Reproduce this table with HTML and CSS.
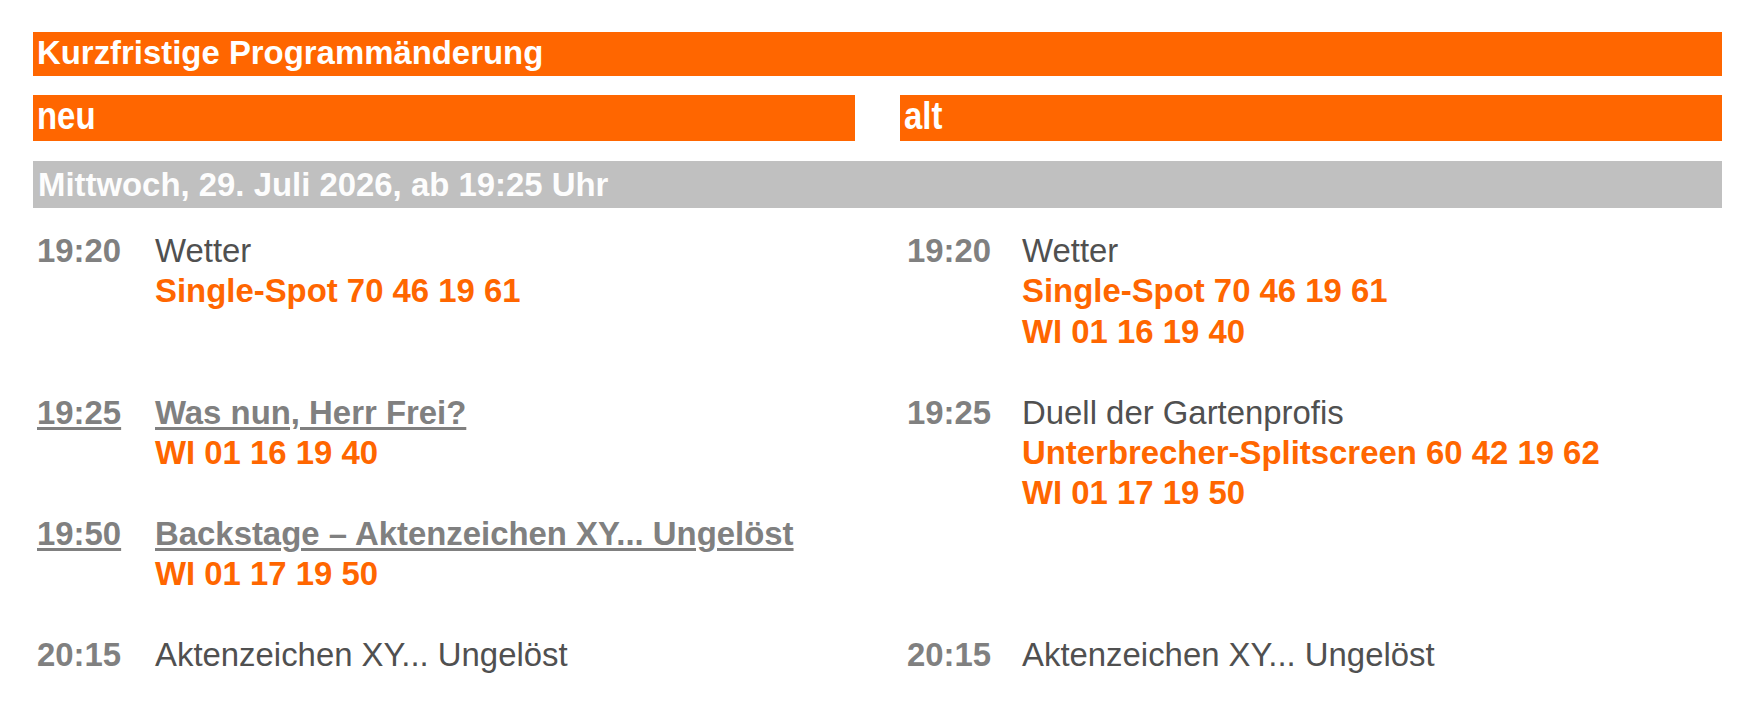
FILE: index.html
```html
<!DOCTYPE html>
<html lang="de">
<head>
<meta charset="utf-8">
<title>Kurzfristige Programmänderung</title>
<link rel="stylesheet" href="styles.css">
</head>
<body>
<div class="page">
  <div class="bar bar-title">Kurzfristige Programmänderung</div>
  <div class="cols heads">
    <div class="bar bar-col"><span class="tall">neu</span></div>
    <div class="bar bar-col"><span class="tall">alt</span></div>
  </div>
  <div class="bar bar-date">Mittwoch, 29. Juli 2026, ab 19:25 Uhr</div>
  <div class="cols schedule">
    <div class="cell cell-new">
      <div class="entry">
        <div class="time">19:20</div>
        <div class="body">
          <div class="title">Wetter</div>
          <div class="code">Single-Spot 70 46 19 61</div>
        </div>
      </div>
    </div>
    <div class="cell cell-old">
      <div class="entry">
        <div class="time">19:20</div>
        <div class="body">
          <div class="title">Wetter</div>
          <div class="code">Single-Spot 70 46 19 61</div>
          <div class="code">WI 01 16 19 40</div>
        </div>
      </div>
    </div>
    <div class="cell cell-new">
      <div class="entry changed">
        <div class="time"><span class="ul">19:25</span></div>
        <div class="body">
          <div class="title"><span class="ul">Was nun, Herr Frei?</span></div>
          <div class="code">WI 01 16 19 40</div>
        </div>
      </div>
      <div class="entry changed">
        <div class="time"><span class="ul">19:50</span></div>
        <div class="body">
          <div class="title"><span class="ul">Backstage – Aktenzeichen XY... Ungelöst</span></div>
          <div class="code">WI 01 17 19 50</div>
        </div>
      </div>
    </div>
    <div class="cell cell-old">
      <div class="entry">
        <div class="time">19:25</div>
        <div class="body">
          <div class="title">Duell der Gartenprofis</div>
          <div class="code">Unterbrecher-Splitscreen 60 42 19 62</div>
          <div class="code">WI 01 17 19 50</div>
        </div>
      </div>
    </div>
    <div class="cell cell-new">
      <div class="entry">
        <div class="time">20:15</div>
        <div class="body">
          <div class="title">Aktenzeichen XY... Ungelöst</div>
        </div>
      </div>
    </div>
    <div class="cell cell-old">
      <div class="entry">
        <div class="time">20:15</div>
        <div class="body">
          <div class="title">Aktenzeichen XY... Ungelöst</div>
        </div>
      </div>
    </div>
  </div>
</div>
</body>
</html>
```

FILE: styles.css
```css
html, body {
  margin: 0;
  padding: 0;
  background: #ffffff;
}

body {
  font-family: "Liberation Sans", Arial, sans-serif;
  font-size: 32.9px;
}

.page {
  padding: 32px 28px 0 33px;
}

.bar {
  background: #ff6600;
  color: #ffffff;
  font-weight: bold;
  padding-left: 4px;
  white-space: nowrap;
}

.bar-title {
  height: 44px;
  line-height: 42px;
  margin-bottom: 19px;
}

.cols {
  display: grid;
  grid-template-columns: 1fr 1fr;
  column-gap: 45px;
}

.heads {
  margin-bottom: 20px;
}

.bar-col {
  height: 46px;
  line-height: 46px;
}

.tall {
  display: inline-block;
  transform: scaleY(1.2);
  transform-origin: 0 34px;
}

.bar-date {
  background: #c0c0c0;
  color: #fdfdfd;
  height: 47px;
  line-height: 47px;
  padding-left: 5px;
  margin-bottom: 23px;
}

.schedule {
  line-height: 40.4px;
}

.cell-new {
  padding-left: 4px;
}

.cell-old {
  padding-left: 7px;
}

.entry {
  display: flex;
  margin-bottom: 40.4px;
}

.time {
  flex: 0 0 118px;
  font-weight: bold;
  color: #808080;
}

.cell-old .time {
  flex-basis: 115px;
}

.body {
  flex: 1 1 auto;
}

.title {
  color: #505050;
}

.code {
  color: #ff6600;
  font-weight: bold;
}

.changed .title {
  color: #808080;
  font-weight: bold;
}

.ul {
  text-decoration: underline;
  text-decoration-color: #808080;
  text-decoration-thickness: 3px;
  text-underline-offset: 3px;
}
```
